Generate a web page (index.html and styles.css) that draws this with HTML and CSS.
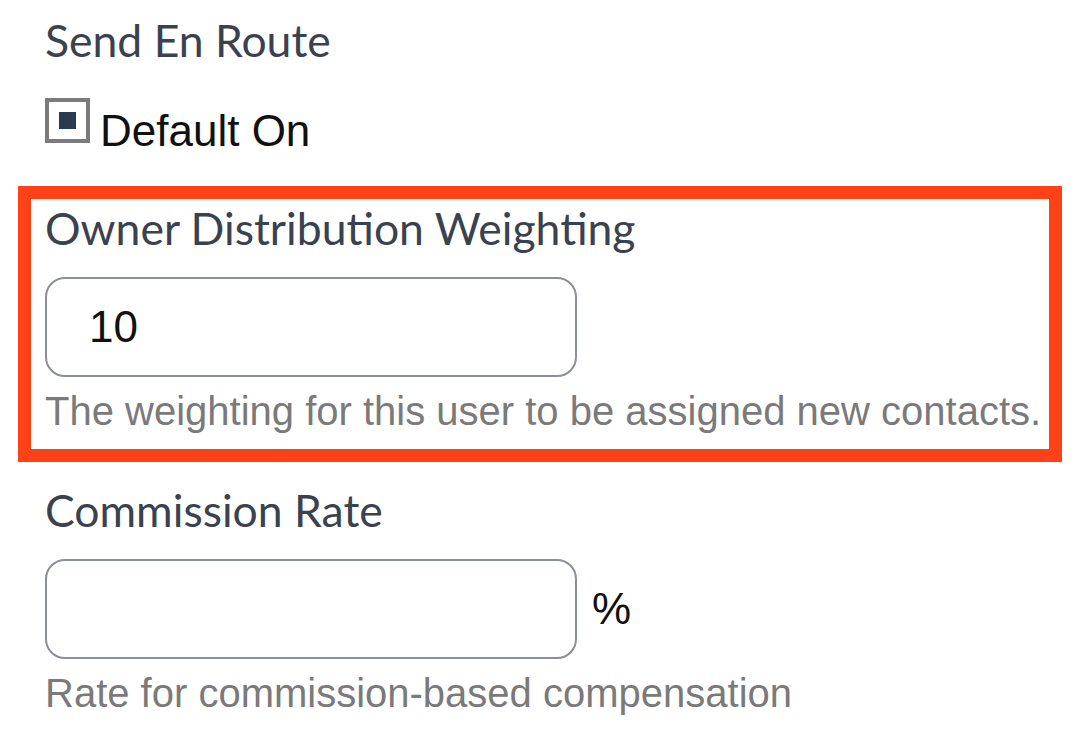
FILE: index.html
```html
<!DOCTYPE html>
<html>
<head>
<meta charset="utf-8">
<link rel="stylesheet" href="styles.css">
</head>
<body>
<div class="form">
  <div class="field">
    <div class="label">Send En Route</div>
    <label class="check">
      <span class="box"><span class="tick"></span></span>
      <span class="check-text">Default On</span>
    </label>
  </div>
  <div class="field highlight">
    <div class="label">Owner Distribution Weighting</div>
    <div class="input-row">
      <div class="input">10</div>
    </div>
    <div class="help">The weighting for this user to be assigned new contacts.</div>
  </div>
  <div class="field commission">
    <div class="label">Commission Rate</div>
    <div class="input-row">
      <div class="input"></div>
      <span class="unit">%</span>
    </div>
    <div class="help">Rate for commission-based compensation</div>
  </div>
</div>
</body>
</html>
```
FILE: styles.css
```css
html, body {
  margin: 0;
  padding: 0;
  background: #ffffff;
}
.form {
  padding: 14px 0 0 18px;
  width: 1044px;
  display: flex;
  flex-direction: column;
}
.field {
  padding: 0 27px;
  display: flex;
  flex-direction: column;
}
.label {
  font-family: "Lato", "Noto Sans", sans-serif;
  font-size: 44.5px;
  line-height: 52px;
  color: #3a4250;
}
.check {
  display: flex;
  align-items: flex-start;
  gap: 10px;
  margin-top: 32px;
}
.box {
  width: 37px;
  height: 37px;
  flex: none;
  border: 4px solid #7b7b7b;
  display: flex;
  align-items: center;
  justify-content: center;
}
.tick {
  width: 17px;
  height: 17px;
  background: #2b3b4f;
}
.check-text {
  font-family: "Liberation Sans", Arial, sans-serif;
  font-size: 44px;
  line-height: 45px;
  margin-top: 10px;
  color: #111111;
}
.highlight {
  margin-top: 33px;
  border: 13px solid #fe4116;
  padding: 3px 14px 15px 14px;
  width: 1044px;
  box-sizing: border-box;
}
.input-row {
  display: flex;
  align-items: center;
  gap: 15px;
  margin-top: 23px;
}
.input {
  width: 532px;
  height: 100px;
  box-sizing: border-box;
  border: 2px solid #8b8f96;
  border-radius: 20px;
  padding: 0 42px;
  display: flex;
  align-items: center;
  font-family: "Liberation Sans", Arial, sans-serif;
  font-size: 44px;
  color: #111111;
}
.unit {
  font-family: "Liberation Sans", Arial, sans-serif;
  font-size: 44px;
  color: #111111;
}
.help {
  font-family: "Liberation Sans", Arial, sans-serif;
  font-size: 40px;
  line-height: 46px;
  color: #7a7a7a;
  margin-top: 11px;
  white-space: nowrap;
}
.commission {
  margin-top: 22px;
}
```
